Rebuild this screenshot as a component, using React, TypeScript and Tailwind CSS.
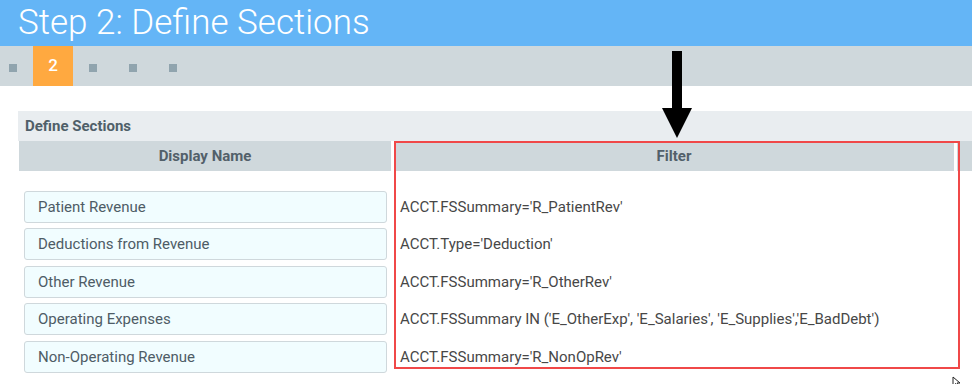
const ROWS = [
  { name: 'Patient Revenue', filter: "ACCT.FSSummary='R_PatientRev'" },
  { name: 'Deductions from Revenue', filter: "ACCT.Type='Deduction'" },
  { name: 'Other Revenue', filter: "ACCT.FSSummary='R_OtherRev'" },
  { name: 'Operating Expenses', filter: "ACCT.FSSummary IN ('E_OtherExp', 'E_Salaries', 'E_Supplies','E_BadDebt')" },
  { name: 'Non-Operating Revenue', filter: "ACCT.FSSummary='R_NonOpRev'" },
];

const STEPS = [1, 2, 3, 4, 5];

function StepBar({ current }: { current: number }) {
  return (
    <div className="h-10 bg-[#cfd8dc] flex -ml-[7px]">
      {STEPS.map((step) => (
        <div
          key={step}
          className={`w-10 h-10 flex items-center justify-center ${step === current ? 'bg-[#ffa940]' : ''}`}
        >
          {step === current ? (
            <span className="text-white text-[17px] font-medium">{step}</span>
          ) : (
            <span className="w-2 h-2 mt-[4px] bg-[#90a4ae]" />
          )}
        </div>
      ))}
    </div>
  );
}

export default function App() {
  return (
    <div className="relative w-[972px] h-[384px] overflow-hidden bg-white font-['Roboto',sans-serif]">
      {/* Header */}
      <div className="h-[46px] bg-[#64b5f6] pl-[18px] flex items-center">
        <h1 className="text-white text-[35px] font-light leading-none -mt-[2px]">Step 2: Define Sections</h1>
      </div>

      <StepBar current={2} />

      {/* Panel */}
      <div className="mt-[25px] ml-[18px]">
        <div className="h-[30px] bg-[#e9edf0] flex items-center pl-[7px]">
          <span className="text-[15px] font-bold text-[#4f5f69]">Define Sections</span>
        </div>

        <div className="flex gap-[3px] pl-px">
          {/* Display Name column */}
          <div className="w-[372px] shrink-0">
            <div className="h-[30px] bg-[#cfd8dc] flex items-center justify-center">
              <span className="text-[15px] font-bold text-[#52606a]">Display Name</span>
            </div>
            <div className="pt-[17px]">
              {ROWS.map((row) => (
                <div key={row.name} className="h-[37.5px] flex items-center pl-[5px] pr-[4px]">
                  <div className="w-full h-[32px] bg-[#f1fdff] border border-[#cfd8dc] rounded-[3px] flex items-center pl-[13px]">
                    <span className="text-[15px] text-[#4e5c66]">{row.name}</span>
                  </div>
                </div>
              ))}
            </div>
          </div>

          {/* Filter column */}
          <div className="w-[560px] shrink-0">
            <div className="h-[30px] bg-[#cfd8dc] flex items-center justify-center">
              <span className="text-[15px] font-bold text-[#52606a]">Filter</span>
            </div>
            <div className="pt-[17px]">
              {ROWS.map((row) => (
                <div key={row.name} className="h-[37.5px] flex items-center pl-[6px]">
                  <span className="text-[15px] text-[#474747] whitespace-nowrap">{row.filter}</span>
                </div>
              ))}
            </div>
          </div>

          {/* next column, cut off */}
          <div className="flex-1">
            <div className="h-[30px] bg-[#cfd8dc]" />
          </div>
        </div>
      </div>

      {/* Red annotation box */}
      <div className="absolute left-[394px] top-[141px] w-[566px] h-[228px] border-2 border-[#f04848] pointer-events-none" />

      {/* Arrow annotation */}
      <svg className="absolute left-[660px] top-[50px]" width="34" height="90" viewBox="0 0 34 90">
        <rect x="12" y="1" width="10" height="58" fill="#000" />
        <polygon points="2,58 32,58 17,88" fill="#000" />
      </svg>

      {/* Mouse cursor */}
      <svg className="absolute left-[952px] top-[376px]" width="10" height="12" viewBox="0 0 10 12">
        <path d="M1 1 L1 10 L3.5 7.5 L5.5 11 L7 10.3 L5 7 L8 7 Z" fill="#fff" stroke="#222" strokeWidth="1" />
      </svg>
    </div>
  );
}
